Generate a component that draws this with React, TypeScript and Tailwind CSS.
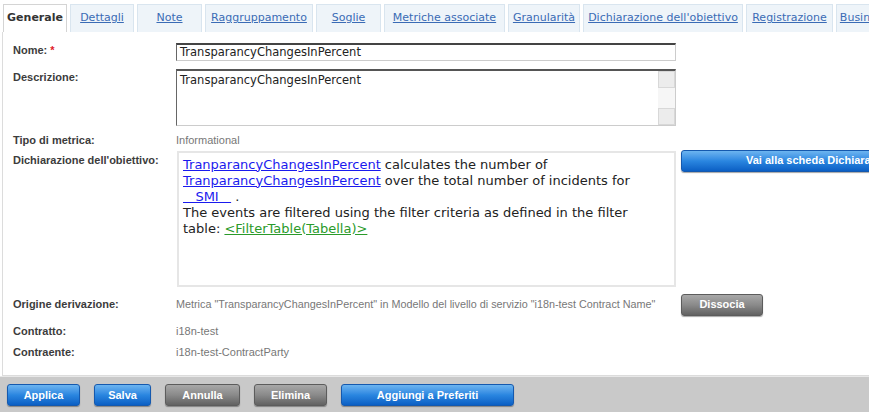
import React from "react";

const tabs = [
  { label: "Generale", w: "w-[64px]", active: true },
  { label: "Dettagli", w: "w-[64px]" },
  { label: "Note", w: "w-[65px]" },
  { label: "Raggruppamento", w: "w-[108px]" },
  { label: "Soglie", w: "w-[65px]" },
  { label: "Metriche associate", w: "w-[121px]" },
  { label: "Granularità", w: "w-[72px]" },
  { label: "Dichiarazione dell'obiettivo", w: "w-[160px]" },
  { label: "Registrazione", w: "w-[87px]" },
  { label: "Busin", w: "w-[38px]" },
];

const verdana = "font-['DejaVu_Sans',Verdana,sans-serif]";
const tahoma = "font-['Liberation_Sans',Tahoma,sans-serif]";

function Label({ children }: { children: React.ReactNode }) {
  return <div className={`w-[163px] shrink-0 text-[11px] font-bold text-[#3c3c3c] ${tahoma}`}>{children}</div>;
}

function Btn({ children, gray, className = "" }: { children: React.ReactNode; gray?: boolean; className?: string }) {
  const color = gray
    ? "border-[#5c5c5c] bg-gradient-to-b from-[#a8a8a8] via-[#8a8a8a] to-[#626262]"
    : "border-[#1559ae] bg-gradient-to-b from-[#6cb4f0] via-[#2a86e0] to-[#0b5fc4]";
  return (
    <button
      className={`flex h-[22px] items-center justify-center whitespace-nowrap rounded-[3px] border text-[11px] font-bold text-white shadow-[0_1px_1px_rgba(0,0,0,0.35)] ${tahoma} ${color} ${className}`}
    >
      {children}
    </button>
  );
}

export default function App() {
  return (
    <div className={`flex h-[412px] w-[869px] flex-col overflow-hidden bg-white ${tahoma}`}>
      {/* tabs */}
      <div className="flex h-[32px] items-end gap-[3px] pl-[3px] pt-[4px]">
        {tabs.map((t) => (
          <div
            key={t.label}
            className={`flex h-[28px] shrink-0 items-center justify-center overflow-hidden whitespace-nowrap border border-b-0 text-[11px] ${verdana} ${t.w} ${
              t.active
                ? "border-[#d4d4d4] bg-white font-bold text-[#333]"
                : "h-[26px] border-[#d9e5ef] bg-[#eef4f9] text-[#3a6bb5] underline"
            }`}
          >
            {t.label}
          </div>
        ))}
      </div>

      {/* body */}
      <div className="ml-[2px] flex h-[344px] flex-col border-b border-l border-[#dcdcdc] pl-[10px]">
        <div className="mt-[11px] flex items-center">
          <Label>
            <div className="-mt-[3px]">
              Nome: <span className="text-[#e0202a]">*</span>
            </div>
          </Label>
          <div
            className={`flex h-[18px] w-[500px] shrink-0 items-center border border-l-[#666] border-t-2 border-t-[#444] border-r-[#ccc] border-b-[#ccc] pl-[3px] text-[11.5px] text-[#222] ${verdana}`}
          >
            TransparancyChangesInPercent
          </div>
        </div>

        <div className="mt-[8px] flex items-start">
          <Label>Descrizione:</Label>
          <div className="flex h-[57px] w-[500px] shrink-0 border border-l-[#666] border-t-2 border-t-[#555] border-r-[#ccc] border-b-[#ccc]">
            <div className={`flex-1 pl-[3px] pt-[1px] text-[11.5px] text-[#222] ${verdana}`}>
              TransparancyChangesInPercent
            </div>
            <div className="flex w-[17px] flex-col justify-between bg-[#f6f6f6]">
              <div className="h-[17px] border border-[#d8d8d8] bg-[#ececec]" />
              <div className="h-[17px] border border-[#d8d8d8] bg-[#ececec]" />
            </div>
          </div>
        </div>

        <div className="mt-[6px] flex items-center">
          <Label>Tipo di metrica:</Label>
          <div className="text-[11px] text-[#777]">Informational</div>
        </div>

        <div className="mt-[2px] flex items-start">
          <Label>
            <div className="pt-[1px]">Dichiarazione dell'obiettivo:</div>
          </Label>
          <div
            className={`ml-[1px] h-[136px] w-[499px] shrink-0 border-2 border-[#e6e6e6] px-[4px] pt-[4px] text-[13px] leading-[16px] text-[#222] ${verdana}`}
          >
            <span className="text-[#1a1aee] underline">TranparancyChangesInPercent</span> calculates the number of
            <br />
            <span className="text-[#1a1aee] underline">TranparancyChangesInPercent</span> over the total number of incidents for
            <br />
            <span className="whitespace-pre text-[#1a1aee] underline">{"   SMI   "}</span> .
            <br />
            The events are filtered using the filter criteria as defined in the filter
            <br />
            table: <span className="text-[#2a9a2a] underline">&lt;FilterTable(Tabella)&gt;</span>
          </div>
          <Btn className="-mt-[1px] ml-[5px] w-[200px] shrink-0 justify-start pl-[64px]">Vai alla scheda Dichiarazione</Btn>
        </div>

        <div className="mt-[7px] flex items-center">
          <Label>Origine derivazione:</Label>
          <div className="w-[505px] shrink-0 text-[10.8px] text-[#777]">
            Metrica "TransparancyChangesInPercent" in Modello del livello di servizio "i18n-test Contract Name"
          </div>
          <Btn gray className="w-[82px] shrink-0">
            Dissocia
          </Btn>
        </div>

        <div className="mt-[7px] flex items-center">
          <Label>Contratto:</Label>
          <div className="text-[11px] text-[#777]">i18n-test</div>
        </div>
        <div className="mt-[5px] flex items-center">
          <Label>Contraente:</Label>
          <div className="text-[11px] text-[#777]">i18n-test-ContractParty</div>
        </div>
      </div>

      {/* footer */}
      <div className="flex flex-1 items-center gap-[14px] border-t border-[#e8e8e8] bg-[#c9c9c9] pl-[7px] pt-[1px]">
        <Btn className="w-[73px]">Applica</Btn>
        <Btn className="w-[57px]">Salva</Btn>
        <Btn gray className="w-[75px]">
          Annulla
        </Btn>
        <Btn gray className="w-[73px]">
          Elimina
        </Btn>
        <Btn className="w-[173px]">Aggiungi a Preferiti</Btn>
      </div>
    </div>
  );
}
